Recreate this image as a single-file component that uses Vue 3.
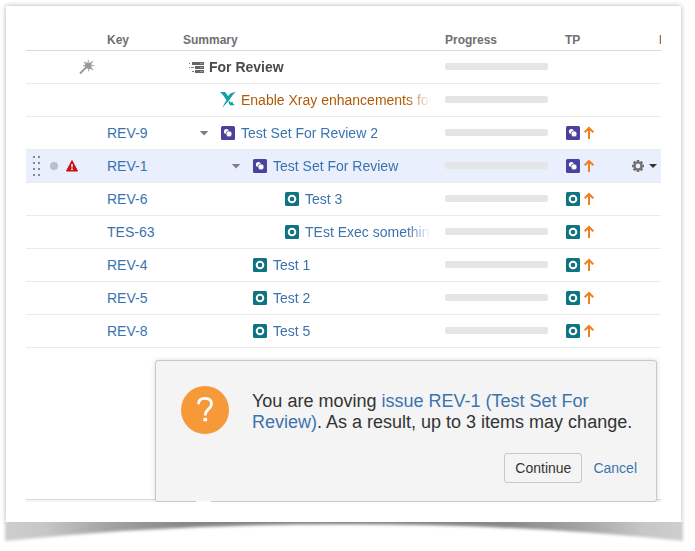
<script setup>
const rows = [
  { level: 0, kind: 'folder', title: 'For Review', wand: true },
  { level: 1, kind: 'xray', title: 'Enable Xray enhancements for' },
  { level: 1, kind: 'set', key: 'REV-9', title: 'Test Set For Review 2', open: true },
  { level: 2, kind: 'set', key: 'REV-1', title: 'Test Set For Review', open: true, selected: true },
  { level: 3, kind: 'test', key: 'REV-6', title: 'Test 3' },
  { level: 3, kind: 'test', key: 'TES-63', title: 'TEst Exec something' },
  { level: 2, kind: 'test', key: 'REV-4', title: 'Test 1' },
  { level: 2, kind: 'test', key: 'REV-5', title: 'Test 2' },
  { level: 2, kind: 'test', key: 'REV-8', title: 'Test 5' }
]
const dotRows = [1, 7, 13, 19]
const teeth = [0, 45, 90, 135, 180, 225, 270, 315]
</script>

<template>
  <svg class="defs" aria-hidden="true">
    <symbol id="icon-set" viewBox="0 0 16 16">
      <rect x="1" y="1" width="14" height="14" rx="1.5" fill="#4a409e" />
      <circle cx="6.4" cy="6.6" r="2.5" fill="#fff" />
      <circle cx="9" cy="8.9" r="3" fill="#fff" stroke="#4a409e" stroke-width=".7" />
    </symbol>
    <symbol id="icon-test" viewBox="0 0 16 16">
      <rect x="1" y="1" width="14" height="14" rx="1.5" fill="#0e7482" />
      <circle cx="8" cy="8" r="3.3" fill="none" stroke="#fff" stroke-width="2" />
    </symbol>
    <symbol id="icon-folder" viewBox="0 0 16 16">
      <path d="M4 3H16V6H4ZM7 7H16V10H7ZM7 11H16V14H7Z" fill="#666" />
      <path d="M12 4.5H15M12 8.5H15M12 12.5H15" stroke="#999" stroke-width="1" />
      <path d="M1 4h1v1H1zM1 8h1v1H1zM3 8h3v1H3zM4 12h2v1H4z" fill="#777" />
    </symbol>
    <symbol id="icon-xray" viewBox="0 0 16 16">
      <path d="M0 0H5.2L8.2 4.3Q10 .4 15.8 0Q13.2 1.7 10.6 6L9 8.4L5.7 12Q4.2 13.7 2.4 15.8Q3.7 12 6.5 8.2Q3.4 2.7 0 0Z" fill="#10a2a8" />
      <path d="M9.1 8.5L10.5 10.5L12.5 9.8L13 11.7L15.2 13.3H10.1L8.5 10.7Z" fill="#10a2a8" />
    </symbol>
  </svg>

  <div class="page">
    <main class="paper">
      <div class="stage">
        <table class="structure">
          <colgroup>
            <col class="col-controls" /><col class="col-key" /><col /><col class="col-progress" /><col class="col-tp" /><col class="col-actions" />
          </colgroup>
          <thead>
            <tr>
              <th></th>
              <th>Key</th>
              <th>Summary</th>
              <th>Progress</th>
              <th>TP</th>
              <th class="cut">L</th>
            </tr>
          </thead>
          <tbody>
            <tr v-for="row in rows" :key="row.title" :class="{ selected: row.selected }">
              <td>
                <div class="controls">
                  <template v-if="row.selected">
                    <svg class="handle" width="7" height="22" viewBox="0 0 7 22" fill="#83899a">
                      <template v-for="y in dotRows" :key="y">
                        <rect x="0" :y="y" width="2" height="2" />
                        <rect x="5" :y="y" width="2" height="2" />
                      </template>
                    </svg>
                    <span class="status"></span>
                    <svg class="warning" width="12" height="12" viewBox="0 0 12 12">
                      <path d="M6 .6L11.5 11H.5Z" fill="#cc1016" stroke="#cc1016" stroke-linejoin="round" />
                      <path d="M5.1 4H6.9L6.5 7.7H5.5ZM5.2 8.6H6.8V10.1H5.2Z" fill="#fff" />
                    </svg>
                  </template>
                  <svg v-if="row.wand" class="wand" width="16" height="16" viewBox="0 0 16 16">
                    <path d="M1 14.5L7.5 8" stroke="#999" stroke-width="1.8" />
                    <path d="M6 3.5H12.5V10H8.5L6 7.5Z" fill="#999" />
                    <path d="M9.3 1V3M5 3L7 5M13.8 2.3L12 4M12.5 6.5H15.2M12 9L14 11M9.7 10V12.2M4 6.7H6" stroke="#aaa" stroke-width="1.2" />
                  </svg>
                </div>
              </td>
              <td><a v-if="row.key" href="#">{{ row.key }}</a></td>
              <td class="summary-cell">
                <div class="summary" :class="row.kind" :style="{ paddingLeft: `${5 + row.level * 32}px` }">
                  <button v-if="row.open" class="toggle" type="button" aria-label="Collapse">
                    <svg width="16" height="16" viewBox="0 0 16 16"><path d="M3.8 6H12.4L8.1 10.5Z" fill="#808080" /></svg>
                  </button>
                  <svg class="icon" width="16" height="16"><use :href="`#icon-${row.kind}`" /></svg>
                  <strong v-if="row.level === 0">{{ row.title }}</strong>
                  <a v-else href="#">{{ row.title }}</a>
                </div>
              </td>
              <td class="progress-cell"><div class="bar"></div></td>
              <td>
                <div v-if="row.key" class="tp">
                  <svg width="16" height="16"><use :href="`#icon-${row.kind}`" /></svg>
                  <svg width="12" height="16" viewBox="0 0 12 16">
                    <path d="M6 14V3.5M1.7 7.3L6 3L10.3 7.3" fill="none" stroke="#ee7f22" stroke-width="2" />
                  </svg>
                </div>
              </td>
              <td>
                <button v-if="row.selected" class="actions" type="button" aria-label="Actions">
                  <svg width="14" height="14" viewBox="0 0 14 14">
                    <rect v-for="a in teeth" :key="a" x="5.7" y="1" width="2.6" height="3" fill="#707070" :transform="`rotate(${a} 7 7)`" />
                    <circle cx="7" cy="7" r="3.5" fill="none" stroke="#707070" stroke-width="2.2" />
                  </svg>
                  <svg width="8" height="14" viewBox="0 0 8 14"><path d="M0 5H8L4 9Z" fill="#333" /></svg>
                </button>
              </td>
            </tr>
          </tbody>
        </table>

        <div class="footer-strip"></div>

        <section class="dialog" role="dialog" aria-labelledby="move-message">
          <div class="message">
            <svg class="question" width="48" height="48" viewBox="0 0 48 48">
              <circle cx="24" cy="24" r="24" fill="#f79839" />
              <path d="M17.5 18.2Q17.5 12.4 24 12.4Q30.5 12.4 30.5 18Q30.5 20.5 27.7 22.8Q24.2 25.7 24.2 29.6" fill="none" stroke="#fff" stroke-width="2.8" />
              <path d="M22.4 31.8H26.1V35.3H22.4Z" fill="#fff" />
            </svg>
            <p id="move-message">You are moving <a href="#">issue REV-1 (Test Set For Review)</a>. As a result, up to 3 items may change.</p>
          </div>
          <div class="buttons">
            <button class="primary" type="button">Continue</button>
            <button class="cancel" type="button">Cancel</button>
          </div>
          <span class="tip"></span>
        </section>
      </div>
    </main>
    <svg class="curl" viewBox="0 0 695 29" preserveAspectRatio="none" aria-hidden="true">
      <defs>
        <linearGradient id="curl-tone" x1="0" x2="1" y1="0" y2="0">
          <stop offset="0" stop-color="#cecece" />
          <stop offset=".06" stop-color="#c6c6c6" />
          <stop offset=".15" stop-color="#a4a4a4" />
          <stop offset=".26" stop-color="#888" />
          <stop offset=".5" stop-color="#808080" />
          <stop offset=".74" stop-color="#888" />
          <stop offset=".85" stop-color="#a4a4a4" />
          <stop offset=".94" stop-color="#c6c6c6" />
          <stop offset="1" stop-color="#cecece" />
        </linearGradient>
        <filter id="curl-blur" x="-5%" y="-50%" width="110%" height="200%"><feGaussianBlur stdDeviation="1.6" /></filter>
      </defs>
      <path d="M5 -6H683V19Q520 2 344 2Q168 2 5 19Z" fill="url(#curl-tone)" filter="url(#curl-blur)" />
    </svg>
  </div>
</template>

<style>
body {
  margin: 0;
  background: #fff;
}
</style>

<style scoped>
.defs {
  position: absolute;
  width: 0;
  height: 0;
}
.page {
  display: flex;
  flex-direction: column;
  min-height: 100vh;
  box-sizing: border-box;
  padding-top: 6px;
  font: 14px/20px "Liberation Sans", Arial, sans-serif;
  color: #333;
}
.paper {
  display: flex;
  flex: 1;
  margin: 0 14px 0 6px;
  padding: 20px;
  background: #fff;
  box-shadow: 0 0 5px rgba(0, 0, 0, 0.32);
}
.curl {
  display: block;
  position: relative;
  width: 100%;
  height: 29px;
}
.stage {
  position: relative;
  display: flex;
  flex: 1;
  min-width: 0;
  flex-direction: column;
  justify-content: space-between;
  overflow: hidden;
}
.structure {
  width: 100%;
  margin-bottom: 151px;
  table-layout: fixed;
  border-spacing: 0;
}
.col-controls { width: 81px; }
.col-key { width: 76px; }
.col-progress { width: 120px; }
.col-tp { width: 66px; }
.col-actions { width: 30px; }
th,
td {
  padding: 0;
  text-align: left;
  white-space: nowrap;
}
th {
  height: 25px;
  padding-top: 3px;
  box-sizing: border-box;
  border-bottom: 1px solid #d8d8d8;
  font-size: 12px;
  line-height: 20px;
  color: #707070;
}
.cut {
  padding-left: 28px;
  overflow: hidden;
}
td {
  height: 32px;
  border-bottom: 1px solid #ebebeb;
}
.selected td {
  background: #e9effc;
}
a {
  color: #3b73af;
  text-decoration: none;
}
button {
  padding: 0;
  border: 0;
  background: none;
  font: inherit;
  cursor: pointer;
}
.controls {
  display: grid;
  grid-template-columns: 20px 16px 20px 10px;
  align-items: center;
  justify-items: center;
}
.handle { grid-column: 1; }
.status {
  grid-column: 2;
  width: 8px;
  height: 8px;
  border-radius: 50%;
  background: #b8bfcf;
}
.warning { grid-column: 3; }
.wand { grid-column: 4; }
.summary-cell {
  padding-right: 14px;
}
.summary {
  display: flex;
  align-items: center;
  gap: 5px;
  overflow: hidden;
  mask-image: linear-gradient(to right, #000 calc(100% - 24px), transparent);
}
.summary .icon {
  flex: none;
}
.summary strong {
  color: #4a4a4a;
}
.summary.xray a {
  color: #b05a08;
}
.toggle {
  display: flex;
  margin: 0 3px 0 -24px;
}
.progress-cell {
  padding-bottom: 2px;
  box-sizing: border-box;
  height: 33px;
}
.bar {
  width: 103px;
  height: 7px;
  border-radius: 2px;
  background: #e5e5e5;
}
.tp {
  display: flex;
  gap: 2px;
}
.actions {
  display: flex;
  gap: 4px;
}
.footer-strip {
  height: 2px;
  border-top: 1px solid #d8d8d8;
  background: #f5f5f5;
}
.dialog {
  position: absolute;
  right: 4px;
  bottom: 0;
  left: 129px;
  box-sizing: border-box;
  padding: 25px 19px 18px 25px;
  border: 1px solid #c8c8c8;
  border-radius: 3px;
  background: #f4f4f4;
  box-shadow: 0 0 5px rgba(0, 0, 0, 0.15);
}
.message {
  display: flex;
  gap: 23px;
}
.question {
  flex: none;
}
.message p {
  margin: 5px 0 0;
  font-size: 18px;
  line-height: 21px;
}
.buttons {
  display: flex;
  justify-content: flex-end;
  gap: 11px;
  margin-top: 19px;
}
.primary {
  height: 30px;
  padding: 0 10px;
  border: 1px solid #c8c8c8;
  border-radius: 3px;
  color: #333;
}
.cancel {
  color: #3b73af;
}
.tip {
  position: absolute;
  bottom: -1px;
  left: 40px;
  width: 15px;
  height: 1px;
  background: #fafafa;
}
</style>
